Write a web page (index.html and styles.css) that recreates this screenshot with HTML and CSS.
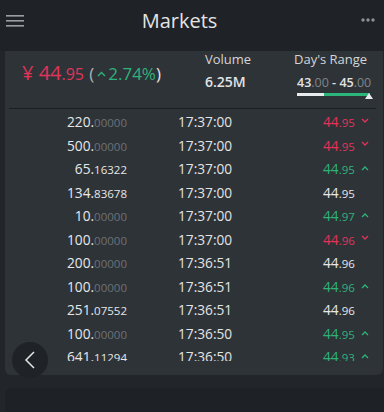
FILE: index.html
```html
<!DOCTYPE html>
<html lang="en">
<head>
    <meta charset="UTF-8">
    <meta name="viewport" content="width=device-width, initial-scale=1.0">
    <title>Markets</title>
    <link rel="stylesheet" href="styles.css">
</head>
<body>
    <div class="topbar">
        <svg class="menu-icon" width="18" height="12" viewBox="0 0 18 12">
            <rect x="0" y="0" width="18" height="1.6" fill="#9a9da1"/>
            <rect x="0" y="5" width="18" height="1.6" fill="#9a9da1"/>
            <rect x="0" y="10" width="18" height="1.6" fill="#9a9da1"/>
        </svg>
        <h1>Markets</h1>
        <svg class="more-icon" width="14" height="4" viewBox="0 0 14 4">
            <circle cx="2" cy="2" r="1.7" fill="#8c8f93"/>
            <circle cx="7" cy="2" r="1.7" fill="#8c8f93"/>
            <circle cx="12" cy="2" r="1.7" fill="#8c8f93"/>
        </svg>
    </div>

    <div class="card">
        <div class="summary">
            <div class="last-price">
                <span class="down">¥ 44<small>.95</small></span>
                <span class="paren">(</span><span class="up"><svg class="chev" width="9" height="6" viewBox="0 0 9 6"><polyline points="1,5 4.5,1.5 8,5" fill="none" stroke="currentColor" stroke-width="1.4"/></svg>2.74%</span><span class="paren-w">)</span>
            </div>
            <div class="volume">
                <div class="label">Volume</div>
                <div class="value">6.25M</div>
            </div>
            <div class="range">
                <div class="label">Day's Range</div>
                <div class="range-values">43<span class="dim">.00</span> - 45<span class="dim">.00</span></div>
                <div class="range-bar">
                    <div class="range-low"></div>
                    <div class="range-high"></div>
                    <span class="range-marker"></span>
                </div>
            </div>
        </div>

        <div class="trades">
            <div class="trade"><span class="amt">220.<i class="dim">00000</i></span><span class="time">17:37:00</span><span class="px down">44<small>.95</small></span><span class="dir down"><svg width="8" height="5" viewBox="0 0 8 5"><polyline points="1,1 4,4 7,1" fill="none" stroke="currentColor" stroke-width="1.3"/></svg></span></div>
            <div class="trade"><span class="amt">500.<i class="dim">00000</i></span><span class="time">17:37:00</span><span class="px down">44<small>.95</small></span><span class="dir down"><svg width="8" height="5" viewBox="0 0 8 5"><polyline points="1,1 4,4 7,1" fill="none" stroke="currentColor" stroke-width="1.3"/></svg></span></div>
            <div class="trade"><span class="amt">65.<i>16322</i></span><span class="time">17:37:00</span><span class="px up">44<small>.95</small></span><span class="dir up"><svg width="8" height="5" viewBox="0 0 8 5"><polyline points="1,4 4,1 7,4" fill="none" stroke="currentColor" stroke-width="1.3"/></svg></span></div>
            <div class="trade"><span class="amt">134.<i>83678</i></span><span class="time">17:37:00</span><span class="px">44<small>.95</small></span><span class="dir"></span></div>
            <div class="trade"><span class="amt">10.<i class="dim">00000</i></span><span class="time">17:37:00</span><span class="px up">44<small>.97</small></span><span class="dir up"><svg width="8" height="5" viewBox="0 0 8 5"><polyline points="1,4 4,1 7,4" fill="none" stroke="currentColor" stroke-width="1.3"/></svg></span></div>
            <div class="trade"><span class="amt">100.<i class="dim">00000</i></span><span class="time">17:37:00</span><span class="px down">44<small>.96</small></span><span class="dir down"><svg width="8" height="5" viewBox="0 0 8 5"><polyline points="1,1 4,4 7,1" fill="none" stroke="currentColor" stroke-width="1.3"/></svg></span></div>
            <div class="trade"><span class="amt">200.<i class="dim">00000</i></span><span class="time">17:36:51</span><span class="px">44<small>.96</small></span><span class="dir"></span></div>
            <div class="trade"><span class="amt">100.<i class="dim">00000</i></span><span class="time">17:36:51</span><span class="px up">44<small>.96</small></span><span class="dir up"><svg width="8" height="5" viewBox="0 0 8 5"><polyline points="1,4 4,1 7,4" fill="none" stroke="currentColor" stroke-width="1.3"/></svg></span></div>
            <div class="trade"><span class="amt">251.<i>07552</i></span><span class="time">17:36:51</span><span class="px">44<small>.96</small></span><span class="dir"></span></div>
            <div class="trade"><span class="amt">100.<i class="dim">00000</i></span><span class="time">17:36:50</span><span class="px up">44<small>.95</small></span><span class="dir up"><svg width="8" height="5" viewBox="0 0 8 5"><polyline points="1,4 4,1 7,4" fill="none" stroke="currentColor" stroke-width="1.3"/></svg></span></div>
            <div class="trade"><span class="amt">641.<i>11294</i></span><span class="time">17:36:50</span><span class="px up">44<small>.93</small></span><span class="dir up"><svg width="8" height="5" viewBox="0 0 8 5"><polyline points="1,4 4,1 7,4" fill="none" stroke="currentColor" stroke-width="1.3"/></svg></span></div>
        </div>

        <button class="back-btn" aria-label="Back">
            <svg width="12" height="18" viewBox="0 0 12 18">
                <polyline points="10,1 2,9 10,17" fill="none" stroke="#e6e6e6" stroke-width="1.5"/>
            </svg>
        </button>
    </div>

    <div class="next-card"></div>
</body>
</html>
```

FILE: styles.css
```css
body {
    margin: 0;
    padding: 0;
    font-family: 'Open Sans', 'Noto Sans', sans-serif;
    background-color: #222529;
    color: #e2e3e4;
    width: 384px;
    height: 412px;
    overflow: hidden;
}
.topbar {
    display: flex;
    align-items: center;
    justify-content: space-between;
    height: 51px;
    padding: 0 9px 11px 6px;
    box-sizing: border-box;
    background-color: #1f2226;
}
.topbar h1 {
    margin: 0 26px 0 0;
    font-size: 20px;
    font-weight: 400;
    color: #e4e4e4;
}
.menu-icon {
    margin-top: 2px;
}
.card {
    position: relative;
    margin: 0 1px 0 5px;
    background-color: #2e3338;
    border-radius: 0 0 6px 6px;
    padding-bottom: 14px;
}
.summary {
    display: flex;
    height: 58px;
    box-sizing: border-box;
    border-bottom: 1px solid #1c1f22;
    margin: 0 7px 0 4px;
}
.last-price {
    width: 196px;
    padding: 8px 0 0 13px;
    box-sizing: border-box;
    font-size: 20px;
    white-space: nowrap;
}
.last-price small {
    font-size: 16px;
}
.last-price .paren {
    font-size: 17px;
    color: #aeb1b4;
}
.last-price .paren-w {
    font-size: 17px;
    color: #e4e4e4;
}
.last-price .up {
    font-size: 17px;
}
.chev {
    margin: 0 2px 3px 3px;
}
.volume {
    width: 89px;
}
.label {
    font-size: 13px;
    color: #d4d5d6;
    line-height: 16px;
}
.volume .value {
    font-size: 14px;
    font-weight: 600;
    margin-top: 5px;
}
.range {
    display: flex;
    flex-direction: column;
    align-items: flex-start;
}
.range-values {
    font-size: 12.5px;
    font-weight: 600;
    margin: 8px 0 0 3px;
    line-height: 16px;
}
.range-values .dim {
    font-weight: 400;
    color: #7f8388;
}
.range-bar {
    position: relative;
    display: flex;
    width: 73px;
    height: 3px;
    margin: 2px 0 0 3px;
}
.range-low {
    width: 27px;
    background-color: #e9eaeb;
}
.range-high {
    flex: 1;
    background-color: #2bb57a;
}
.range-marker {
    position: absolute;
    right: -3px;
    top: 0;
    width: 0;
    height: 0;
    border-left: 4px solid transparent;
    border-right: 4px solid transparent;
    border-bottom: 6px solid #e9eaeb;
}
.trades {
    height: 252px;
    overflow: hidden;
    padding-top: 1px;
    box-sizing: border-box;
}
.trade {
    display: grid;
    grid-template-columns: 122px 51px 145px 35px 1fr;
    height: 23.5px;
    align-items: center;
    font-size: 13.7px;
    white-space: nowrap;
}
.trade .amt {
    grid-column: 1;
    text-align: right;
    color: #e6e7e8;
}
.trade .amt i {
    font-style: normal;
    font-size: 11.5px;
}
.trade .amt i.dim {
    color: #6c7176;
}
.trade .time {
    grid-column: 3;
    color: #e2e3e4;
}
.trade .px {
    grid-column: 4;
    color: #e6e7e8;
}
.trade small {
    font-size: 11.5px;
}
.trade .dir {
    grid-column: 5;
    display: flex;
    align-items: center;
    padding-left: 3px;
}
.trade .dir.down svg {
    margin-top: -3px;
}
.up {
    color: #2eb27a !important;
}
.down {
    color: #e0345a !important;
}
.back-btn {
    position: absolute;
    left: 7px;
    bottom: -3px;
    width: 36px;
    height: 36px;
    border-radius: 50%;
    border: none;
    background-color: #1f2226;
    display: flex;
    align-items: center;
    justify-content: center;
    padding: 0;
}
.next-card {
    margin: 13px 0 0 5px;
    height: 40px;
    background-color: #1e2125;
    border-radius: 6px 0 0 0;
}
```
